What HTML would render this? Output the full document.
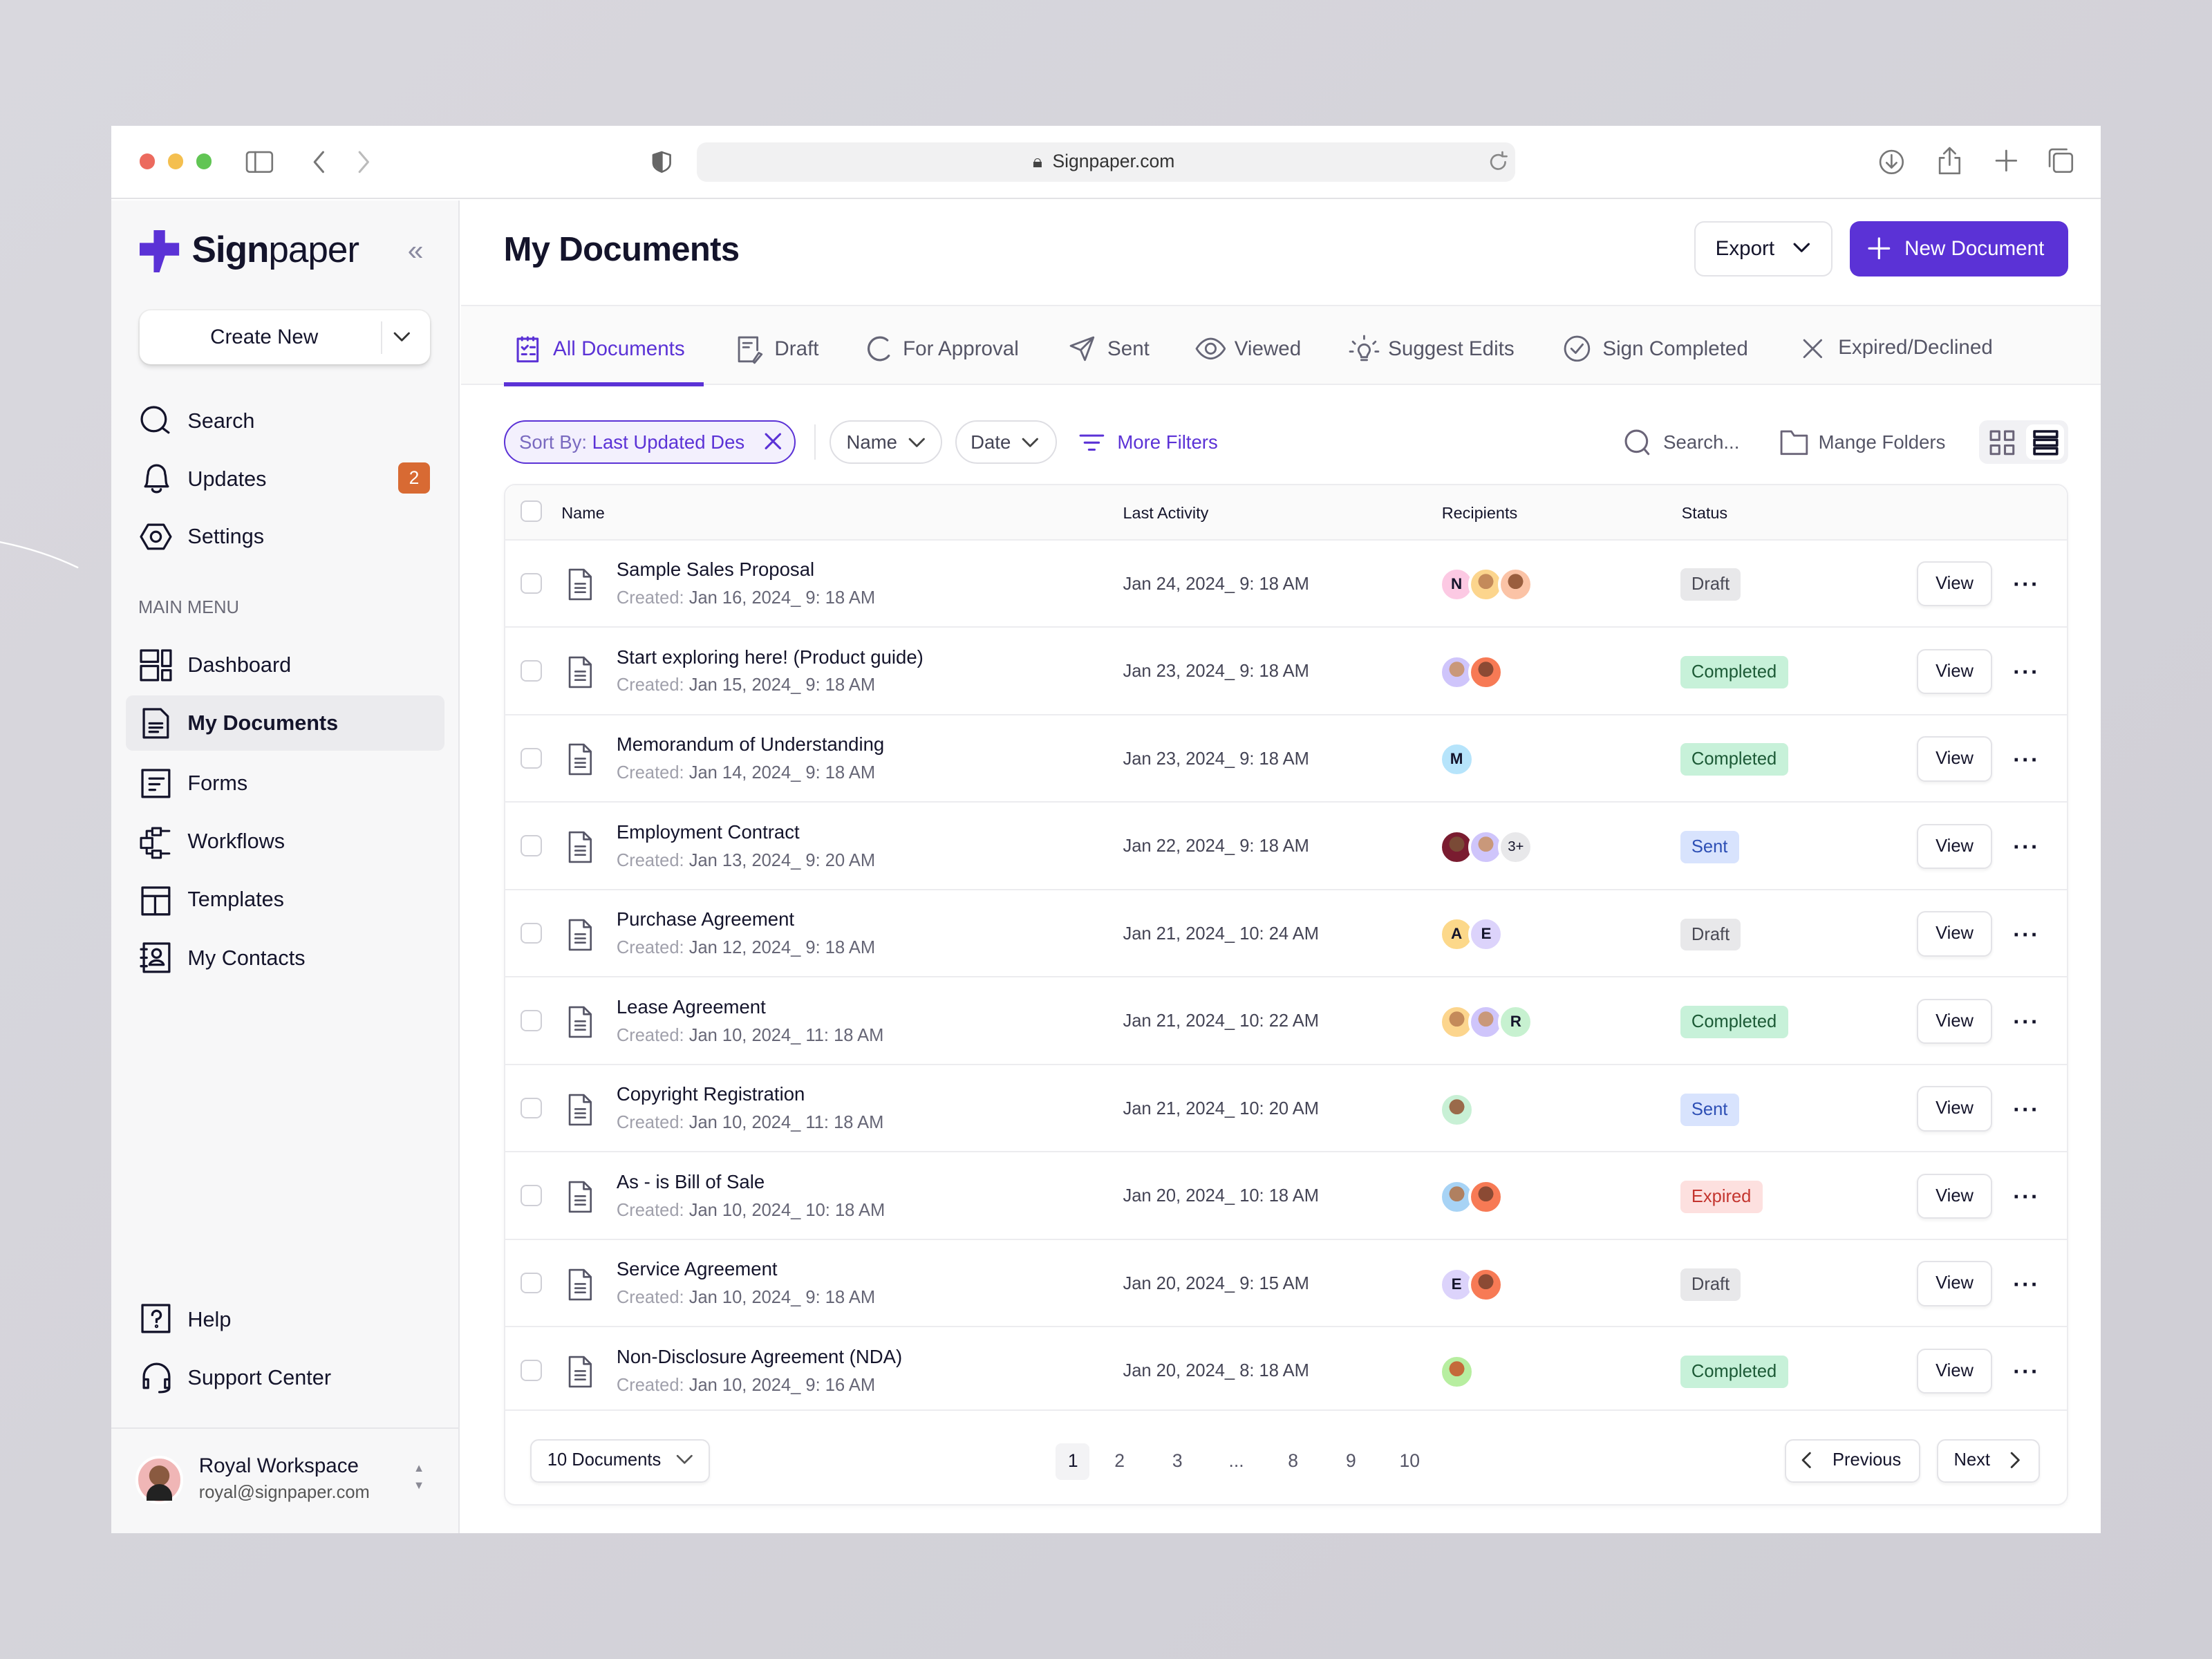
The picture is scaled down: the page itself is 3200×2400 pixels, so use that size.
<!DOCTYPE html>
<html><head><meta charset="utf-8">
<style>
*{box-sizing:border-box;margin:0;padding:0}
html,body{width:3200px;height:2400px;overflow:hidden;background:#d6d5db}
#f{position:absolute;left:0;top:0;width:1568px;height:1176px;zoom:2.04082;font-family:"Liberation Sans",sans-serif;color:#14142b;background:linear-gradient(135deg,#d9d8de,#cfced5)}
.a{position:absolute}
.t{position:absolute;white-space:nowrap}
svg{position:absolute;fill:none;stroke-linecap:round;stroke-linejoin:round}
.nav{font-size:15px;color:#14142b}
.tab{font-size:14.5px;color:#555566}
.row{position:absolute;left:357px;width:1109px;height:62px;border-top:1px solid #ececef}
.cb{position:absolute;left:12px;top:23px;width:15px;height:15px;border:1.3px solid #cfcfd6;border-radius:4px;background:#fff}
.nm{position:absolute;left:80px;top:13px;font-size:13.5px;color:#14142b;white-space:nowrap}
.cr{position:absolute;left:80px;top:34px;font-size:12.5px;color:#666676;white-space:nowrap}
.cr span{color:#a0a0ab}
.la{position:absolute;left:439px;top:24px;font-size:12.5px;color:#444455;white-space:nowrap}
.av{position:absolute;top:19px;width:25px;height:25px;border-radius:50%;border:2px solid #fff;font-size:11px;text-align:center;line-height:21px;color:#14142b;font-weight:bold}
.st{position:absolute;left:834px;top:20px;height:23px;padding:0 8px;border-radius:4px;font-size:12.5px;line-height:23px}
.dr{background:#e8e8ea;color:#4a4a55}.co{background:#c7f1d9;color:#1c5a36}.se{background:#d8e3fd;color:#2d4fb5}.ex{background:#fde0df;color:#c4352f}
.vw{position:absolute;left:1002px;top:15px;width:53px;height:32px;border:1px solid #e3e3e7;border-radius:6px;font-size:12.5px;text-align:center;line-height:30px;box-shadow:0 1px 2px rgba(0,0,0,.06);background:#fff}
.dt{position:absolute;left:1070px;top:22px;font-size:16px;letter-spacing:1px;font-weight:bold}
.ic{left:45px;top:20px}
</style></head><body><div id="f">
<svg class="a" style="left:0;top:380px" width="60" height="30"><path d="M0 4 Q30 10 55 22" stroke="#fff" stroke-width="1.2"/></svg>
<!-- window -->
<div class="a" style="left:79px;top:89px;width:1410px;height:998px;background:#fff;overflow:hidden">
<div class="a" style="left:0;top:0;width:1410px;height:52px;background:#fff;border-bottom:1px solid #e2e2e5"></div>
<div class="a" style="left:20px;top:20px;width:11px;height:11px;border-radius:50%;background:#ec6a5e"></div>
<div class="a" style="left:40px;top:20px;width:11px;height:11px;border-radius:50%;background:#f4bf4f"></div>
<div class="a" style="left:60px;top:20px;width:11px;height:11px;border-radius:50%;background:#61c554"></div>
<svg style="left:95px;top:17px" width="22" height="18" stroke="#777" stroke-width="1.3"><rect x="1" y="2" width="18" height="14" rx="2"/><path d="M7 2v14"/></svg>
<svg style="left:140px;top:17px" width="14" height="18" stroke="#777" stroke-width="1.5"><path d="M10 2L4 9l6 7"/></svg>
<svg style="left:172px;top:17px" width="14" height="18" stroke="#bbb" stroke-width="1.5"><path d="M4 2l6 7-6 7"/></svg>
<svg style="left:382px;top:17px" width="16" height="18" stroke="#666" stroke-width="1.3"><path d="M8 2L2 4v6c0 3 3 5 6 6 3-1 6-3 6-6V4z"/><path d="M8 2v14L2 10V4z" fill="#666"/></svg>
<div class="a" style="left:415px;top:12px;width:580px;height:28px;background:#f1f1f2;border-radius:7px"></div>
<div class="t" style="left:653px;top:18px;font-size:13px;color:#444">🔒︎</div>
<div class="t" style="left:667px;top:18px;font-size:13px;color:#333">Signpaper.com</div>
<svg style="left:975px;top:18px" width="16" height="16" stroke="#888" stroke-width="1.3"><path d="M13 8a5 5 0 1 1-2-4M11 1v3h3"/></svg>
<svg style="left:1252px;top:16px" width="20" height="20" stroke="#777" stroke-width="1.3"><circle cx="10" cy="10" r="8"/><path d="M10 5v9M6.5 10.5L10 14l3.5-3.5"/></svg>
<svg style="left:1293px;top:14px" width="20" height="22" stroke="#777" stroke-width="1.3"><path d="M10 2v12M6 6l4-4 4 4M6 9H3v11h14V9h-3"/></svg>
<svg style="left:1334px;top:16px" width="18" height="18" stroke="#777" stroke-width="1.4"><path d="M9 2v14M2 9h14"/></svg>
<svg style="left:1372px;top:15px" width="20" height="20" stroke="#777" stroke-width="1.3"><rect x="5" y="5" width="13" height="13" rx="2"/><path d="M2 14V4a2 2 0 0 1 2-2h10"/></svg>

<!-- sidebar -->
<div class="a" style="left:0;top:53px;width:247px;height:945px;background:#f7f7f8;border-right:1px solid #e6e6e9"></div>
</div>
<!-- logo -->
<svg style="left:99px;top:163px" width="30" height="30"><path d="M10 0h8v9h10v9h-10l-4 12h-4v-12H0V9h10z" fill="#5b32d6"/></svg>
<div class="t" style="left:136px;top:162px;font-size:26px;letter-spacing:-0.5px"><b>Sign</b>paper</div>
<div class="t" style="left:289px;top:166px;font-size:20px;color:#8a8aa0">«</div>
<div class="a" style="left:99px;top:220px;width:206px;height:38px;background:#fff;border-radius:8px;box-shadow:0 2px 3px rgba(0,0,0,.12),0 0 0 1px #eee"></div>
<div class="t" style="left:149px;top:231px;font-size:14.5px">Create New</div>
<div class="a" style="left:270px;top:228px;width:1px;height:23px;background:#e6e6e9"></div>
<svg style="left:278px;top:233px" width="14" height="12" stroke="#333" stroke-width="1.4"><path d="M2 3l5 5 5-5"/></svg>

<svg style="left:99px;top:287px" width="24" height="24" stroke="#14142b" stroke-width="1.6"><circle cx="10" cy="10" r="8.5"/><path d="M16.5 16.5l4 3"/></svg>
<div class="t nav" style="left:133px;top:290px">Search</div>
<svg style="left:99px;top:328px" width="24" height="24" stroke="#14142b" stroke-width="1.6"><path d="M4 17c2-2 1-6 2-9a6 6 0 0 1 12 0c1 3 0 7 2 9zM9 19a3 2 0 0 0 6 0"/></svg>
<div class="t nav" style="left:133px;top:331px">Updates</div>
<div class="a" style="left:282px;top:328px;width:23px;height:22px;border-radius:4px;background:#d86a33;color:#fff;font-size:13px;text-align:center;line-height:22px">2</div>
<svg style="left:99px;top:370px" width="24" height="22" stroke="#14142b" stroke-width="1.6"><path d="M6 2h11l5 8.5-5 8.5H6L1 10.5z"/><circle cx="11.5" cy="10.5" r="3.5"/></svg>
<div class="t nav" style="left:133px;top:372px">Settings</div>
<div class="t" style="left:98px;top:424px;font-size:12.5px;color:#6b6b78">MAIN MENU</div>
<svg style="left:99px;top:460px" width="24" height="24" stroke="#14142b" stroke-width="1.6"><rect x="1" y="1" width="12" height="8"/><rect x="1" y="12" width="12" height="10"/><rect x="16" y="1" width="6" height="11"/><rect x="16" y="15" width="6" height="7"/></svg>
<div class="t nav" style="left:133px;top:463px">Dashboard</div>
<div class="a" style="left:89px;top:493px;width:226px;height:39px;background:#ebebee;border-radius:5px"></div>
<svg style="left:100px;top:502px" width="22" height="22" stroke="#14142b" stroke-width="1.6"><path d="M2 1h12l5 5v15H2zM6 11h9M6 14h9M6 17h6"/></svg>
<div class="t nav" style="left:133px;top:504px;font-weight:bold">My Documents</div>
<svg style="left:100px;top:545px" width="22" height="22" stroke="#14142b" stroke-width="1.6"><rect x="1" y="1" width="19" height="19"/><path d="M6 7h10M6 11h7M6 15h4"/></svg>
<div class="t nav" style="left:133px;top:547px">Forms</div>
<svg style="left:99px;top:586px" width="24" height="24" stroke="#14142b" stroke-width="1.5"><rect x="9" y="1" width="6" height="5"/><rect x="1" y="8" width="8" height="7"/><rect x="9" y="17" width="6" height="5"/><path d="M15 3h6M15 19h6M5 8V3h4M5 15v4h4"/></svg>
<div class="t nav" style="left:133px;top:588px">Workflows</div>
<svg style="left:100px;top:628px" width="22" height="22" stroke="#14142b" stroke-width="1.6"><rect x="1" y="1" width="19" height="19"/><path d="M1 7h19M10 7v13"/></svg>
<div class="t nav" style="left:133px;top:629px">Templates</div>
<svg style="left:99px;top:668px" width="24" height="24" stroke="#14142b" stroke-width="1.6"><rect x="3" y="1" width="18" height="20"/><circle cx="12" cy="8" r="3"/><path d="M7 16c1-4 9-4 10 0zM1 5h4M1 11h4M1 17h4"/></svg>
<div class="t nav" style="left:133px;top:671px">My Contacts</div>
<svg style="left:100px;top:924px" width="22" height="22" stroke="#14142b" stroke-width="1.6"><rect x="1" y="1" width="19" height="19"/><path d="M8 8a3 3 0 1 1 3 3v2"/><circle cx="11" cy="16" r=".5"/></svg>
<div class="t nav" style="left:133px;top:927px">Help</div>
<svg style="left:99px;top:965px" width="24" height="24" stroke="#14142b" stroke-width="1.6"><path d="M3 13V11a9 9 0 0 1 18 0v2M3 13h3v6H3zM18 13h3v6h-3zM21 19c0 2-3 3-7 3"/></svg>
<div class="t nav" style="left:133px;top:968px">Support Center</div>
<div class="a" style="left:79px;top:1012px;width:247px;height:1px;background:#e6e6e9"></div>
<div class="a" style="left:96px;top:1032px;width:34px;height:34px;border-radius:50%;background:radial-gradient(circle at 50% 40%,#8a5a40 0 30%,#f0b6b6 31%);border:2px solid #fff"></div>
<div class="a" style="left:104px;top:1052px;width:18px;height:12px;border-radius:9px 9px 0 0;background:#222"></div>
<div class="t" style="left:141px;top:1031px;font-size:14.5px">Royal Workspace</div>
<div class="t" style="left:141px;top:1051px;font-size:12.5px;color:#555">royal@signpaper.com</div>
<div class="t" style="left:293px;top:1035px;font-size:8px;color:#8a8a95;line-height:12px">▲<br>▼</div>

<!-- main header -->
<div class="t" style="left:357px;top:163px;font-size:24px;font-weight:bold;letter-spacing:-0.3px">My Documents</div>
<div class="a" style="left:1201px;top:157px;width:98px;height:39px;border:1px solid #e3e3e7;border-radius:7px;background:#fff"></div>
<div class="t" style="left:1216px;top:168px;font-size:14.5px">Export</div>
<svg style="left:1270px;top:170px" width="14" height="12" stroke="#14142b" stroke-width="1.5"><path d="M2 3l5 5 5-5"/></svg>
<div class="a" style="left:1311px;top:157px;width:155px;height:39px;border-radius:7px;background:#5b32d6"></div>
<svg style="left:1324px;top:168px" width="16" height="16" stroke="#fff" stroke-width="1.6"><path d="M8 1v14M1 8h14"/></svg>
<div class="t" style="left:1350px;top:168px;font-size:14.5px;color:#fff">New Document</div>
<!-- tabs -->
<div class="a" style="left:327px;top:216px;width:1162px;height:57px;background:#fafafa;border-top:1px solid #ececef;border-bottom:1px solid #ececef"></div>
<div class="a" style="left:357px;top:271px;width:142px;height:3px;background:#5b32d6"></div>
<svg style="left:365px;top:238px" width="18" height="20" stroke="#5b32d6" stroke-width="1.5"><rect x="2" y="2" width="14" height="16"/><path d="M5 1v2M9 1v2M13 1v2M5 8l1.5 1.5L9 7M11 8h3M5 13h3M11 13h3"/></svg>
<div class="t tab" style="left:392px;top:239px;color:#5b32d6">All Documents</div>
<svg style="left:522px;top:237px" width="20" height="22" stroke="#666677" stroke-width="1.4"><path d="M12 19H2V2h13v9M5 6h6M5 9h4M13 20l5-6-2-1-4 6z"/></svg>
<div class="t tab" style="left:549px;top:239px">Draft</div>
<svg style="left:612px;top:236px" width="22" height="22" stroke="#666677" stroke-width="1.6"><path d="M17 5a8 8 0 1 0 1 11"/></svg>
<div class="t tab" style="left:640px;top:239px">For Approval</div>
<svg style="left:757px;top:237px" width="20" height="20" stroke="#666677" stroke-width="1.4"><path d="M18 2L2 8l7 3 3 7zM9 11l9-9"/></svg>
<div class="t tab" style="left:785px;top:239px">Sent</div>
<svg style="left:847px;top:238px" width="22" height="18" stroke="#666677" stroke-width="1.4"><path d="M1 9c3-5 7-7 10-7s7 2 10 7c-3 5-7 7-10 7S4 14 1 9z"/><circle cx="11" cy="9" r="3.5"/></svg>
<div class="t tab" style="left:875px;top:239px">Viewed</div>
<svg style="left:956px;top:236px" width="22" height="22" stroke="#666677" stroke-width="1.4"><path d="M7 12a4 4 0 1 1 8 0c0 2-2 3-2 5H9c0-2-2-3-2-5zM9 19h4M11 2v2M3 6l1.5 1.5M19 6l-1.5 1.5M1 13h2M19 13h2"/></svg>
<div class="t tab" style="left:984px;top:239px">Suggest Edits</div>
<svg style="left:1108px;top:237px" width="20" height="20" stroke="#666677" stroke-width="1.4"><circle cx="10" cy="10" r="8.5"/><path d="M6 10l3 3 5-6"/></svg>
<div class="t tab" style="left:1136px;top:239px">Sign Completed</div>
<svg style="left:1276px;top:238px" width="18" height="18" stroke="#666677" stroke-width="1.4"><path d="M3 3l12 12M15 3L3 15"/></svg>
<div class="t tab" style="left:1303px;top:238px">Expired/Declined</div>
<!-- filters -->
<div class="a" style="left:357px;top:298px;width:207px;height:31px;border:1px solid #5b32d6;border-radius:16px;background:#f3f0fd"></div>
<div class="t" style="left:368px;top:306px;font-size:13.5px;color:#5b32d6"><span style="color:#7a6ac0">Sort By:</span> Last Updated Des</div>
<svg style="left:541px;top:306px" width="14" height="14" stroke="#5b32d6" stroke-width="1.5"><path d="M2 2l10 10M12 2L2 12"/></svg>
<div class="a" style="left:577px;top:301px;width:1px;height:25px;background:#e6e6e9"></div>
<div class="a" style="left:588px;top:298px;width:80px;height:31px;border:1px solid #dedee3;border-radius:16px"></div>
<div class="t" style="left:600px;top:306px;font-size:13.5px;color:#444455">Name</div>
<svg style="left:643px;top:308px" width="14" height="12" stroke="#444" stroke-width="1.4"><path d="M2 3l5 5 5-5"/></svg>
<div class="a" style="left:677px;top:298px;width:72px;height:31px;border:1px solid #dedee3;border-radius:16px"></div>
<div class="t" style="left:688px;top:306px;font-size:13.5px;color:#444455">Date</div>
<svg style="left:723px;top:308px" width="14" height="12" stroke="#444" stroke-width="1.4"><path d="M2 3l5 5 5-5"/></svg>
<svg style="left:764px;top:306px" width="20" height="16" stroke="#5b32d6" stroke-width="1.5"><path d="M2 3h16M5 8h10M8 13h4"/></svg>
<div class="t" style="left:792px;top:306px;font-size:13.5px;color:#5b32d6">More Filters</div>
<svg style="left:1151px;top:304px" width="20" height="20" stroke="#6a6478" stroke-width="1.5"><circle cx="9" cy="9" r="7.5"/><path d="M14.5 14.5l3 3.5"/></svg>
<div class="t" style="left:1179px;top:306px;font-size:13.5px;color:#555566">Search...</div>
<svg style="left:1261px;top:304px" width="22" height="20" stroke="#6a6478" stroke-width="1.4"><path d="M2 2h7l2 3h9v13H2z"/></svg>
<div class="t" style="left:1289px;top:306px;font-size:13.5px;color:#555566">Mange Folders</div>
<div class="a" style="left:1403px;top:298px;width:63px;height:31px;background:#f1f1f4;border-radius:6px"></div>
<div class="a" style="left:1436px;top:301px;width:27px;height:25px;background:#fff;border-radius:5px"></div>
<svg style="left:1409px;top:304px" width="20" height="20" stroke="#6a6478" stroke-width="1.5"><rect x="2" y="2" width="6" height="6"/><rect x="12" y="2" width="6" height="6"/><rect x="2" y="12" width="6" height="6"/><rect x="12" y="12" width="6" height="6"/></svg>
<svg style="left:1440px;top:304px" width="20" height="20" stroke="#14142b" stroke-width="1.8"><rect x="2" y="2" width="16" height="4"/><rect x="2" y="8" width="16" height="4"/><rect x="2" y="14" width="16" height="4"/></svg>

<!-- table -->
<div class="a" style="left:357px;top:343px;width:1109px;height:724px;border:1px solid #ececef;border-radius:8px;background:#fff;box-shadow:0 1px 3px rgba(0,0,0,.04)"></div>
<div class="a" style="left:358px;top:344px;width:1107px;height:38px;background:#fafafa;border-radius:8px 8px 0 0"></div>
<div class="a" style="left:369px;top:355px;width:15px;height:15px;border:1.3px solid #cfcfd6;border-radius:4px;background:#fff"></div>
<div class="t" style="left:398px;top:357px;font-size:11.5px">Name</div>
<div class="t" style="left:796px;top:357px;font-size:11.5px">Last Activity</div>
<div class="t" style="left:1022px;top:357px;font-size:11.5px">Recipients</div>
<div class="t" style="left:1192px;top:357px;font-size:11.5px">Status</div>

<svg width="0" height="0" style="position:absolute"><defs><g id="doc"><path d="M2 1h10l5 5v16H2zM12 1v5h5M6 11h7M6 14h7M6 17h7" stroke="#555566" stroke-width="1.3" fill="none"/></g></defs></svg>

<div class="row" style="top:382px"><div class="cb"></div><svg class="ic" width="20" height="24"><use href="#doc"/></svg><div class="nm">Sample Sales Proposal</div><div class="cr"><span>Created:</span> Jan 16, 2024_ 9: 18 AM</div><div class="la">Jan 24, 2024_ 9: 18 AM</div>
<div class="av" style="left:663px;background:#fcc9e3">N</div><div class="av" style="left:684px;background:radial-gradient(circle at 50% 40%,#c48a5a 0 32%,#fcd58d 33%)"></div><div class="av" style="left:705px;background:radial-gradient(circle at 50% 40%,#9a5e3e 0 32%,#fbc3a6 33%)"></div>
<div class="st dr">Draft</div><div class="vw">View</div><div class="dt">···</div></div>

<div class="row" style="top:444px"><div class="cb"></div><svg class="ic" width="20" height="24"><use href="#doc"/></svg><div class="nm">Start exploring here! (Product guide)</div><div class="cr"><span>Created:</span> Jan 15, 2024_ 9: 18 AM</div><div class="la">Jan 23, 2024_ 9: 18 AM</div>
<div class="av" style="left:663px;background:radial-gradient(circle at 50% 40%,#c9987a 0 32%,#cfc5fb 33%)"></div><div class="av" style="left:684px;background:radial-gradient(circle at 50% 40%,#8b4a34 0 32%,#f77a55 33%)"></div>
<div class="st co">Completed</div><div class="vw">View</div><div class="dt">···</div></div>

<div class="row" style="top:506px"><div class="cb"></div><svg class="ic" width="20" height="24"><use href="#doc"/></svg><div class="nm">Memorandum of Understanding</div><div class="cr"><span>Created:</span> Jan 14, 2024_ 9: 18 AM</div><div class="la">Jan 23, 2024_ 9: 18 AM</div>
<div class="av" style="left:663px;background:#b6e4fb">M</div>
<div class="st co">Completed</div><div class="vw">View</div><div class="dt">···</div></div>

<div class="row" style="top:568px"><div class="cb"></div><svg class="ic" width="20" height="24"><use href="#doc"/></svg><div class="nm">Employment Contract</div><div class="cr"><span>Created:</span> Jan 13, 2024_ 9: 20 AM</div><div class="la">Jan 22, 2024_ 9: 18 AM</div>
<div class="av" style="left:663px;background:radial-gradient(circle at 50% 40%,#7a4a36 0 32%,#7a1c30 33%)"></div><div class="av" style="left:684px;background:radial-gradient(circle at 50% 40%,#c9987a 0 32%,#cfc5fb 33%)"></div><div class="av" style="left:705px;background:#e8e8ea;font-weight:normal;font-size:10px">3+</div>
<div class="st se">Sent</div><div class="vw">View</div><div class="dt">···</div></div>

<div class="row" style="top:630px"><div class="cb"></div><svg class="ic" width="20" height="24"><use href="#doc"/></svg><div class="nm">Purchase Agreement</div><div class="cr"><span>Created:</span> Jan 12, 2024_ 9: 18 AM</div><div class="la">Jan 21, 2024_ 10: 24 AM</div>
<div class="av" style="left:663px;background:#fcd88a">A</div><div class="av" style="left:684px;background:#dcd3fb">E</div>
<div class="st dr">Draft</div><div class="vw">View</div><div class="dt">···</div></div>

<div class="row" style="top:692px"><div class="cb"></div><svg class="ic" width="20" height="24"><use href="#doc"/></svg><div class="nm">Lease Agreement</div><div class="cr"><span>Created:</span> Jan 10, 2024_ 11: 18 AM</div><div class="la">Jan 21, 2024_ 10: 22 AM</div>
<div class="av" style="left:663px;background:radial-gradient(circle at 50% 40%,#c48a5a 0 32%,#fcd58d 33%)"></div><div class="av" style="left:684px;background:radial-gradient(circle at 50% 40%,#c9987a 0 32%,#cfc5fb 33%)"></div><div class="av" style="left:705px;background:#c7f1d0">R</div>
<div class="st co">Completed</div><div class="vw">View</div><div class="dt">···</div></div>

<div class="row" style="top:754px"><div class="cb"></div><svg class="ic" width="20" height="24"><use href="#doc"/></svg><div class="nm">Copyright Registration</div><div class="cr"><span>Created:</span> Jan 10, 2024_ 11: 18 AM</div><div class="la">Jan 21, 2024_ 10: 20 AM</div>
<div class="av" style="left:663px;background:radial-gradient(circle at 50% 40%,#9a6a4a 0 32%,#c8f0d5 33%)"></div>
<div class="st se">Sent</div><div class="vw">View</div><div class="dt">···</div></div>

<div class="row" style="top:816px"><div class="cb"></div><svg class="ic" width="20" height="24"><use href="#doc"/></svg><div class="nm">As - is Bill of Sale</div><div class="cr"><span>Created:</span> Jan 10, 2024_ 10: 18 AM</div><div class="la">Jan 20, 2024_ 10: 18 AM</div>
<div class="av" style="left:663px;background:radial-gradient(circle at 50% 40%,#b08060 0 32%,#a7d3f5 33%)"></div><div class="av" style="left:684px;background:radial-gradient(circle at 50% 40%,#8b4a34 0 32%,#f77a55 33%)"></div>
<div class="st ex">Expired</div><div class="vw">View</div><div class="dt">···</div></div>

<div class="row" style="top:878px"><div class="cb"></div><svg class="ic" width="20" height="24"><use href="#doc"/></svg><div class="nm">Service Agreement</div><div class="cr"><span>Created:</span> Jan 10, 2024_ 9: 18 AM</div><div class="la">Jan 20, 2024_ 9: 15 AM</div>
<div class="av" style="left:663px;background:#dcd3fb">E</div><div class="av" style="left:684px;background:radial-gradient(circle at 50% 40%,#8b4a34 0 32%,#f77a55 33%)"></div>
<div class="st dr">Draft</div><div class="vw">View</div><div class="dt">···</div></div>

<div class="row" style="top:940px"><div class="cb"></div><svg class="ic" width="20" height="24"><use href="#doc"/></svg><div class="nm">Non-Disclosure Agreement (NDA)</div><div class="cr"><span>Created:</span> Jan 10, 2024_ 9: 16 AM</div><div class="la">Jan 20, 2024_ 8: 18 AM</div>
<div class="av" style="left:663px;background:radial-gradient(circle at 50% 40%,#c46a3a 0 32%,#b7eea0 33%)"></div>
<div class="st co">Completed</div><div class="vw">View</div><div class="dt">···</div></div>
<div class="a" style="left:357px;top:999px;width:1109px;height:1px;background:#ececef"></div>

<!-- pagination -->
<div class="a" style="left:376px;top:1020px;width:127px;height:31px;border:1px solid #e3e3e7;border-radius:6px;box-shadow:0 1px 2px rgba(0,0,0,.06)"></div>
<div class="t" style="left:388px;top:1028px;font-size:12.5px">10 Documents</div>
<svg style="left:478px;top:1029px" width="14" height="12" stroke="#555" stroke-width="1.3"><path d="M2 3l5 5 5-5"/></svg>
<div class="a" style="left:748px;top:1023px;width:24px;height:26px;background:#f3f3f5;border-radius:4px"></div>
<div class="t" style="left:757px;top:1028px;font-size:13px">1</div>
<div class="t" style="left:790px;top:1028px;font-size:13px;color:#555566">2</div>
<div class="t" style="left:831px;top:1028px;font-size:13px;color:#555566">3</div>
<div class="t" style="left:871px;top:1028px;font-size:13px;color:#555566">...</div>
<div class="t" style="left:913px;top:1028px;font-size:13px;color:#555566">8</div>
<div class="t" style="left:954px;top:1028px;font-size:13px;color:#555566">9</div>
<div class="t" style="left:992px;top:1028px;font-size:13px;color:#555566">10</div>
<div class="a" style="left:1265px;top:1020px;width:96px;height:31px;border:1px solid #e3e3e7;border-radius:6px;box-shadow:0 1px 2px rgba(0,0,0,.06)"></div>
<svg style="left:1275px;top:1028px" width="12" height="14" stroke="#333" stroke-width="1.4"><path d="M8 2L3 7l5 5"/></svg>
<div class="t" style="left:1299px;top:1028px;font-size:12.5px">Previous</div>
<div class="a" style="left:1373px;top:1020px;width:73px;height:31px;border:1px solid #e3e3e7;border-radius:6px;box-shadow:0 1px 2px rgba(0,0,0,.06)"></div>
<div class="t" style="left:1385px;top:1028px;font-size:12.5px">Next</div>
<svg style="left:1422px;top:1028px" width="12" height="14" stroke="#333" stroke-width="1.4"><path d="M4 2l5 5-5 5"/></svg>
</div></body></html>
